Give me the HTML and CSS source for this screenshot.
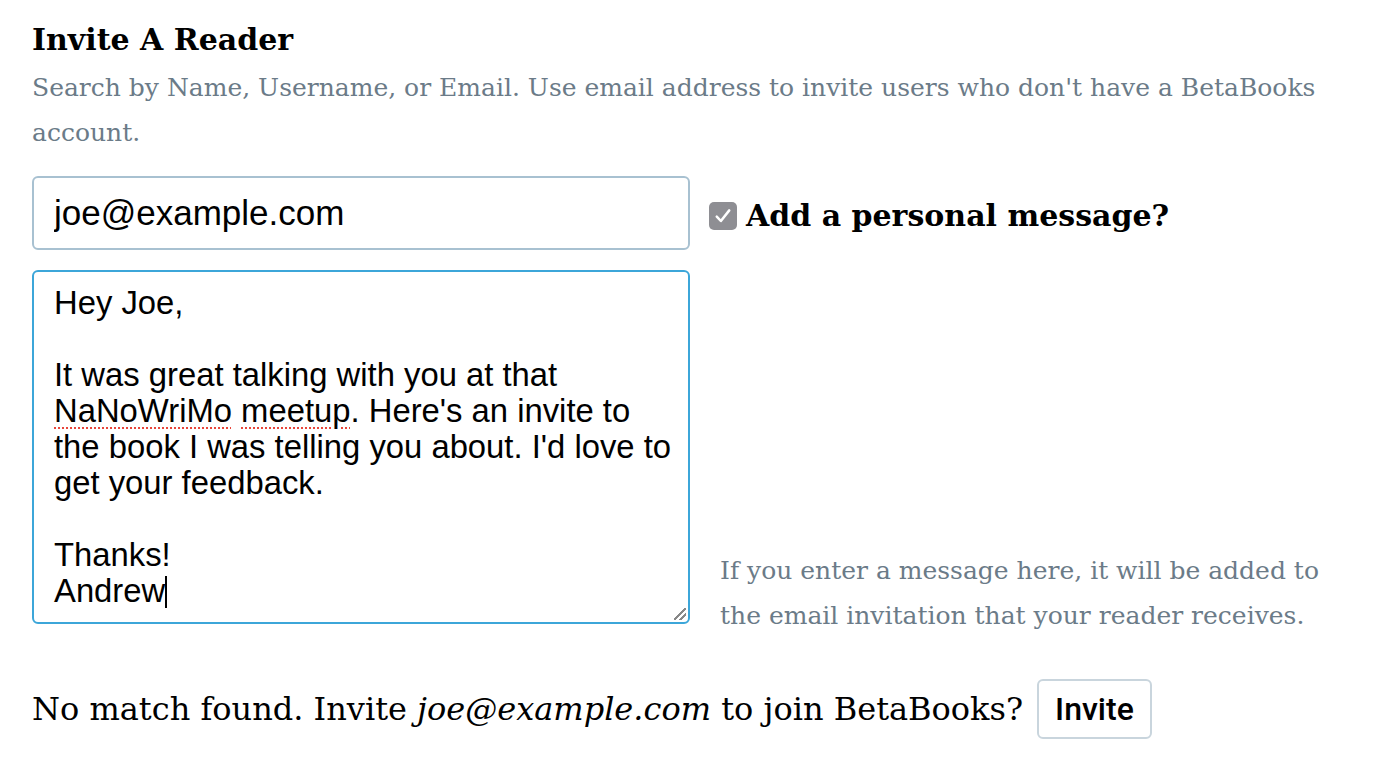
FILE: index.html
```html
<!DOCTYPE html>
<html lang="en">
<head>
    <meta charset="UTF-8">
    <meta name="viewport" content="width=device-width, initial-scale=1.0">
    <title>Invite A Reader</title>
    <link rel="stylesheet" href="styles.css">
</head>
<body>

    <div class="invite-container">
        <h2>Invite A Reader</h2>
        <p class="hint">Search by Name, Username, or Email. Use email address to invite users who don't have a BetaBooks account.</p>

        <div class="invite-grid">
            <input type="text" class="search-input" value="joe@example.com">

            <label class="message-toggle">
                <span class="fake-check">
                    <svg class="check-icon" viewBox="0 0 16 16"><path d="M3 8.5 L6.3 12 L13 3.5" fill="none" stroke="#fff" stroke-width="2" stroke-linecap="round" stroke-linejoin="round"/></svg>
                </span>
                Add a personal message?
            </label>

            <div class="message-box" role="textbox" aria-multiline="true">Hey Joe,

It was great talking with you at that <span class="misspelled">NaNoWriMo</span> <span class="misspelled">meetup</span>. Here's an invite to the book I was telling you about. I'd love to get your feedback.

Thanks!
Andrew<span class="caret"></span>
                <span class="grip"></span>
            </div>

            <p class="hint side-hint">If you enter a message here, it will be added to the email invitation that your reader receives.</p>
        </div>

        <div class="no-match">
            <span>No match found. Invite <em>joe@example.com</em> to join BetaBooks?</span>
            <button type="button" class="invite-btn">Invite</button>
        </div>
    </div>

</body>
</html>
```

FILE: styles.css
```css
body {
    background-color: #fff;
    color: #000;
    font-family: "DejaVu Serif", serif;
    margin: 0;
    padding: 0;
}

.invite-container {
    width: 1300px;
    padding: 14px 32px 0 32px;
}

h2 {
    font-size: 30px;
    font-weight: bold;
    margin: 0;
    line-height: 51px;
}

.hint {
    color: #6b7b88;
    font-size: 25px;
    line-height: 45px;
    margin: 0 0 21px 0;
}

.invite-grid {
    display: grid;
    grid-template-columns: 658px 1fr;
    column-gap: 19px;
    row-gap: 20px;
}

.search-input {
    height: 74px;
    box-sizing: border-box;
    border: 2px solid #a8c1d1;
    border-radius: 6px;
    padding: 0 20px;
    font-family: "Liberation Sans", Arial, sans-serif;
    font-size: 35px;
    color: #000;
    outline: none;
}

.message-toggle {
    display: flex;
    align-items: center;
    gap: 9px;
    padding-top: 5px;
    font-weight: bold;
    font-size: 30px;
}

.fake-check {
    flex: none;
    width: 28px;
    height: 28px;
    border-radius: 5px;
    background-color: #8e8e93;
    display: flex;
    align-items: center;
    justify-content: center;
}

.check-icon {
    width: 20px;
    height: 20px;
}

.message-box {
    position: relative;
    height: 354px;
    box-sizing: border-box;
    border: 2px solid #3ca6d9;
    border-radius: 6px;
    padding: 13px 14px 12px 20px;
    font-family: "Liberation Sans", Arial, sans-serif;
    font-size: 32.8px;
    line-height: 36px;
    white-space: pre-wrap;
}

.misspelled {
    text-decoration: underline dotted #e8463b;
    text-decoration-thickness: 2px;
    text-underline-offset: 5px;
}

.caret {
    display: inline-block;
    width: 2px;
    height: 32px;
    background-color: #000;
    vertical-align: -6px;
}

.grip {
    position: absolute;
    right: 2px;
    bottom: 2px;
    width: 12px;
    height: 12px;
    background: linear-gradient(135deg, transparent 45%, #888 45%, #888 55%, transparent 55%, transparent 70%, #888 70%, #888 80%, transparent 80%);
}

.side-hint {
    align-self: end;
    margin: 0 0 -14px 0;
    padding-left: 11px;
}

.no-match {
    display: flex;
    align-items: center;
    gap: 14px;
    margin-top: 55px;
    font-size: 32px;
}

.no-match em {
    font-style: italic;
}

.invite-btn {
    height: 60px;
    padding: 0 16px;
    background-color: #fff;
    border: 2px solid #c9d5dd;
    border-radius: 6px;
    font-family: Roboto, "Liberation Sans", Arial, sans-serif;
    font-size: 32px;
    font-weight: 500;
    color: #000;
    cursor: pointer;
}
```
